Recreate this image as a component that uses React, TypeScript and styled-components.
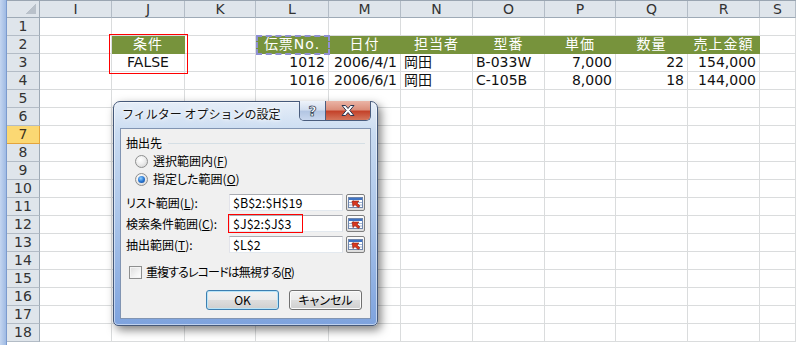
import React from 'react'
import styled, { createGlobalStyle } from 'styled-components'

const SHEET_FONT = `"DejaVu Sans", "Noto Sans CJK JP", sans-serif`
const UI_FONT = `"Noto Sans CJK JP", "Liberation Sans", sans-serif`
const GREEN = '#77933c'
const GRID_LINE = '#dadcdd'

const GlobalStyle = createGlobalStyle`
  html, body {
    margin: 0;
    padding: 0;
    background: #fff;
    overflow: hidden;
  }
`

type Align = 'left' | 'center' | 'right'
type CellData = { text: string; align?: Align; fill?: boolean }

const COLUMNS = [
  { id: 'I', width: 72 },
  { id: 'J', width: 73 },
  { id: 'K', width: 71 },
  { id: 'L', width: 73 },
  { id: 'M', width: 72 },
  { id: 'N', width: 72 },
  { id: 'O', width: 72 },
  { id: 'P', width: 71 },
  { id: 'Q', width: 72 },
  { id: 'R', width: 72 },
  { id: 'S', width: 0 },
]

const head = (text: string): CellData => ({ text, align: 'center', fill: true })
const num = (text: string): CellData => ({ text, align: 'right' })
const txt = (text: string): CellData => ({ text, align: 'left' })

const ROWS: Record<number, Partial<Record<string, CellData>>> = {
  2: {
    J: head('条件'),
    L: head('伝票No.'),
    M: head('日付'),
    N: head('担当者'),
    O: head('型番'),
    P: head('単価'),
    Q: head('数量'),
    R: head('売上金額'),
  },
  3: {
    J: { text: 'FALSE', align: 'center' },
    L: num('1012'),
    M: num('2006/4/1'),
    N: txt('岡田'),
    O: txt('B-033W'),
    P: num('7,000'),
    Q: num('22'),
    R: num('154,000'),
  },
  4: {
    L: num('1016'),
    M: num('2006/6/1'),
    N: txt('岡田'),
    O: txt('C-105B'),
    P: num('8,000'),
    Q: num('18'),
    R: num('144,000'),
  },
}

const ROW_COUNT = 18
const ACTIVE_ROW = 7

const Sheet = styled.div`
  position: relative;
  display: flex;
  width: 796px;
  height: 345px;
  overflow: hidden;
  font-family: ${SHEET_FONT};
`

const EdgeStrip = styled.div`
  width: 6px;
  flex: none;
  background: linear-gradient(90deg, #c3d5f0, #9fbae3);
  border-right: 1px solid #7b9bcf;
`

const Grid = styled.div`
  flex: 1;
  display: grid;
  grid-template-columns: 33px ${COLUMNS.map((c) => (c.width ? `${c.width}px` : '1fr')).join(' ')};
  grid-template-rows: 17px repeat(${ROW_COUNT + 1}, 18px);
  border-top: 1px solid #9aa5b1;
  align-content: start;
`

const HeadCell = styled.div`
  box-sizing: border-box;
  background: #dfe5eb;
  border-right: 1px solid #b3bcc6;
  border-bottom: 1px solid #9eaab6;
  color: #333;
  font-size: 14px;
  line-height: 16px;
  text-align: center;
`

const Corner = styled(HeadCell)`
  position: relative;
  border-right-color: #9eaab6;

  &::after {
    content: '';
    position: absolute;
    right: 3px;
    bottom: 3px;
    width: 10px;
    height: 10px;
    background: linear-gradient(135deg, transparent 50%, #b9c1ca 50%);
  }
`

const RowHead = styled.div<{ $active: boolean }>`
  box-sizing: border-box;
  background: ${(p) => (p.$active ? '#fbd873' : '#dfe5eb')};
  border-right: 1px solid ${(p) => (p.$active ? '#e3a43c' : '#9eaab6')};
  border-bottom: 1px solid ${(p) => (p.$active ? '#e3a43c' : '#b3bcc6')};
  color: ${(p) => (p.$active ? '#3d3320' : '#333')};
  font-size: 14px;
  line-height: 17px;
  text-align: center;
`

const Cell = styled.div<{ $align: Align; $fill: boolean }>`
  box-sizing: border-box;
  border-right: 1px solid ${(p) => (p.$fill ? GREEN : GRID_LINE)};
  border-bottom: 1px solid ${(p) => (p.$fill ? GREEN : GRID_LINE)};
  background: ${(p) => (p.$fill ? GREEN : '#fff')};
  color: ${(p) => (p.$fill ? '#fff' : '#111')};
  text-align: ${(p) => p.$align};
  letter-spacing: ${(p) => (p.$fill ? '1px' : '0')};
  padding: 0 3px;
  font-size: 14px;
  line-height: 17px;
  white-space: nowrap;
  overflow: hidden;
`

const Highlight = styled.div<{ $x: number; $y: number; $w: number; $h: number }>`
  position: absolute;
  left: ${(p) => p.$x}px;
  top: ${(p) => p.$y}px;
  width: ${(p) => p.$w}px;
  height: ${(p) => p.$h}px;
  box-sizing: border-box;
  border: 1px solid #f00;
  pointer-events: none;
`

const CopyMarquee = styled.div`
  position: absolute;
  left: 256px;
  top: 35px;
  width: 74px;
  height: 20px;
  box-sizing: border-box;
  border: 2px dashed #8e90d2;
`

/* ---- dialog ---- */

const Dialog = styled.div`
  position: absolute;
  left: 113px;
  top: 101px;
  width: 265px;
  height: 225px;
  box-sizing: border-box;
  display: flex;
  flex-direction: column;
  border: 1px solid #45597a;
  border-radius: 7px 7px 5px 5px;
  background: linear-gradient(180deg, #e6eef8 0%, #c9dbf1 14%, #acc6ea 50%, #7ea3de 100%);
  box-shadow: 0 0 0 1px rgba(255, 255, 255, 0.5) inset, 3px 4px 10px rgba(0, 0, 0, 0.5);
  font-family: ${UI_FONT};
`

const TitleBar = styled.div`
  display: flex;
  align-items: flex-start;
  height: 26px;
  padding: 0 6px 0 8px;
`

const Title = styled.div`
  padding-top: 4px;
  font-size: 12px;
  line-height: 16px;
  color: #111;
  text-shadow: 0 0 6px #fff, 0 0 3px #fff;
  white-space: nowrap;
`

const CaptionButtons = styled.div`
  margin-left: auto;
  display: flex;
  margin-top: -1px;
  height: 19px;
  border: 1px solid #4a5d7e;
  border-top: none;
  border-radius: 0 0 5px 5px;
  overflow: hidden;
`

const CaptionButton = styled.div<{ $close?: boolean }>`
  display: flex;
  align-items: center;
  justify-content: center;
  width: ${(p) => (p.$close ? '44px' : '25px')};
  background: ${(p) =>
    p.$close
      ? 'linear-gradient(180deg, #eab4a6 0%, #dc8f7c 45%, #c4432b 55%, #d4765c 100%)'
      : 'linear-gradient(180deg, #eef3fa 0%, #d3dff0 45%, #b3c6e3 55%, #c8d7ee 100%)'};
  border-left: ${(p) => (p.$close ? '1px solid #4a5d7e' : 'none')};
`

const HelpGlyph = styled.span`
  color: #fff;
  font-family: "DejaVu Sans", sans-serif;
  font-weight: bold;
  font-size: 14px;
  line-height: 14px;
  -webkit-text-stroke: 0.6px #27324a;
  text-shadow: 0 0 1px #27324a;
`

const Client = styled.div`
  box-sizing: border-box;
  height: 191px;
  margin: 0 6px;
  display: flex;
  flex-direction: column;
  background: #f0f0f0;
  border: 1px solid #8194b2;
  font-size: 12px;
  line-height: 16px;
  color: #000;
  font-feature-settings: 'palt';
`

const GroupHeader = styled.div`
  display: flex;
  align-items: center;
  margin-top: 6px;
  padding: 0 5px;
  height: 16px;

  &::after {
    content: '';
    flex: 1;
    margin-left: 6px;
    border-top: 1px solid #d5dfe5;
  }
`

const RadioList = styled.div`
  display: flex;
  flex-direction: column;
  padding: 1px 0 0 14px;
`

const RadioRow = styled.div`
  display: flex;
  align-items: center;
  gap: 5px;
  height: 18px;
`

const RadioMark = styled.span<{ $checked: boolean }>`
  position: relative;
  width: 13px;
  height: 13px;
  box-sizing: border-box;
  border-radius: 50%;
  border: 1px solid #8e8f8f;
  background: radial-gradient(circle at 40% 35%, #ffffff 0%, #f0f0f0 40%, #cfcfcf 100%);

  &::after {
    content: '';
    display: ${(p) => (p.$checked ? 'block' : 'none')};
    position: absolute;
    left: 2px;
    top: 2px;
    width: 7px;
    height: 7px;
    border-radius: 50%;
    background: radial-gradient(circle at 40% 35%, #8fd0ff 0%, #2a78d4 50%, #0d3f8c 100%);
  }
`

const RangeGrid = styled.div`
  display: grid;
  grid-template-columns: 100px 114px 19px;
  grid-auto-rows: 17px;
  column-gap: 3px;
  row-gap: 4px;
  margin-top: 6px;
  padding-left: 5px;
  align-items: center;
`

const RangeLabel = styled.div`
  white-space: nowrap;
`

const RangeInput = styled.div`
  position: relative;
  box-sizing: border-box;
  height: 17px;
  padding-left: 3px;
  background: #fff;
  border: 1px solid;
  border-color: #abadb3 #dbdfe6 #e3e9ef #e2e3ea;
  font-size: 12.5px;
  line-height: 15px;
  white-space: nowrap;
`

const InputMark = styled.div`
  position: absolute;
  left: -2px;
  top: -2px;
  width: 75px;
  height: 19px;
  box-sizing: border-box;
  border: 1px solid #f00;
`

const RefButton = styled.div`
  box-sizing: border-box;
  height: 17px;
  display: flex;
  align-items: center;
  justify-content: center;
  border: 1px solid #7f7f7f;
  border-radius: 2px;
  background: linear-gradient(180deg, #fdfdfd 0%, #ececec 50%, #dcdcdc 100%);
`

const CheckRow = styled.div`
  display: flex;
  align-items: center;
  gap: 4px;
  height: 16px;
  margin-top: 11px;
  padding-left: 8px;
`

const CheckLabel = styled.span`
  letter-spacing: -0.9px;
`

const CheckMark = styled.span`
  width: 13px;
  height: 13px;
  box-sizing: border-box;
  border: 1px solid #8e8f8f;
  background: linear-gradient(135deg, #dcdcdc 0%, #f3f3f3 60%, #ffffff 100%);
  box-shadow: inset 0 0 0 1px #f4f4f4;
`

const ButtonRow = styled.div`
  display: flex;
  justify-content: flex-end;
  gap: 10px;
  margin-top: 10px;
  padding-right: 8px;
`

const PushButton = styled.div<{ $default?: boolean }>`
  box-sizing: border-box;
  width: 73px;
  height: 20px;
  display: flex;
  align-items: center;
  justify-content: center;
  border: 1px solid ${(p) => (p.$default ? '#3c7fb1' : '#707070')};
  border-radius: 3px;
  background: linear-gradient(180deg, #f2f2f2 0%, #ebebeb 50%, #dddddd 51%, #cfcfcf 100%);
  box-shadow: ${(p) => (p.$default ? 'inset 0 0 0 1px #b8e4f8' : 'inset 0 0 0 1px #fbfbfb')};
  font-size: 12px;
  line-height: 14px;
`

const RefIcon = () => (
  <svg width='15' height='11' viewBox='0 0 15 11'>
    <rect x='0.5' y='0.5' width='14' height='10' fill='#fff' stroke='#6f86ad' />
    <rect x='1' y='1' width='13' height='2' fill='#3f73c2' />
    <line x1='1' y1='5.5' x2='14' y2='5.5' stroke='#9fb3d3' />
    <line x1='1' y1='8' x2='14' y2='8' stroke='#9fb3d3' />
    <line x1='5.5' y1='3' x2='5.5' y2='10' stroke='#9fb3d3' />
    <path d='M4 4 L11 4 L9 6 L12 9 L10 10.5 L7 7.5 L5 9.5 Z' fill='#d8361e' stroke='#8e1c0d' strokeWidth='0.6' />
  </svg>
)

const CloseGlyph = () => (
  <svg width='14' height='11' viewBox='0 0 14 11'>
    <path
      d='M1 0.5 H4.5 L7 3.5 L9.5 0.5 H13 L8.8 5.5 L13 10.5 H9.5 L7 7.5 L4.5 10.5 H1 L5.2 5.5 Z'
      fill='#fff'
      stroke='#2b3550'
      strokeWidth='1'
    />
  </svg>
)

const RANGE_FIELDS = [
  { label: 'リスト範囲', key: 'L', value: '$B$2:$H$19', marked: false },
  { label: '検索条件範囲', key: 'C', value: '$J$2:$J$3', marked: true },
  { label: '抽出範囲', key: 'T', value: '$L$2', marked: false },
]

const FilterDialog = () => (
  <Dialog>
    <TitleBar>
      <Title>フィルター オプションの設定</Title>
      <CaptionButtons>
        <CaptionButton>
          <HelpGlyph>?</HelpGlyph>
        </CaptionButton>
        <CaptionButton $close>
          <CloseGlyph />
        </CaptionButton>
      </CaptionButtons>
    </TitleBar>
    <Client>
      <GroupHeader>抽出先</GroupHeader>
      <RadioList>
        <RadioRow>
          <RadioMark $checked={false} />
          <span>
            選択範囲内(<u>F</u>)
          </span>
        </RadioRow>
        <RadioRow>
          <RadioMark $checked />
          <span>
            指定した範囲(<u>O</u>)
          </span>
        </RadioRow>
      </RadioList>
      <RangeGrid>
        {RANGE_FIELDS.map((field) => (
          <React.Fragment key={field.key}>
            <RangeLabel>
              {field.label}(<u>{field.key}</u>):
            </RangeLabel>
            <RangeInput>
              {field.value}
              {field.marked && <InputMark />}
            </RangeInput>
            <RefButton>
              <RefIcon />
            </RefButton>
          </React.Fragment>
        ))}
      </RangeGrid>
      <CheckRow>
        <CheckMark />
        <CheckLabel>
          重複するレコードは無視する(<u>R</u>)
        </CheckLabel>
      </CheckRow>
      <ButtonRow>
        <PushButton $default>OK</PushButton>
        <PushButton>キャンセル</PushButton>
      </ButtonRow>
    </Client>
  </Dialog>
)

export default function App() {
  const rowNumbers = Array.from({ length: ROW_COUNT }, (_, i) => i + 1)

  return (
    <>
      <GlobalStyle />
      <Sheet>
        <EdgeStrip />
        <Grid>
          <Corner />
          {COLUMNS.map((col) => (
            <HeadCell key={col.id}>{col.id}</HeadCell>
          ))}
          {rowNumbers.map((row) => (
            <React.Fragment key={row}>
              <RowHead $active={row === ACTIVE_ROW}>{row}</RowHead>
              {COLUMNS.map((col) => {
                const cell = ROWS[row]?.[col.id]
                return (
                  <Cell key={col.id} $align={cell?.align ?? 'left'} $fill={!!cell?.fill}>
                    {cell?.text}
                  </Cell>
                )
              })}
            </React.Fragment>
          ))}
        </Grid>
        <Highlight $x={109} $y={34} $w={79} $h={40} />
        <CopyMarquee />
        <FilterDialog />
      </Sheet>
    </>
  )
}
